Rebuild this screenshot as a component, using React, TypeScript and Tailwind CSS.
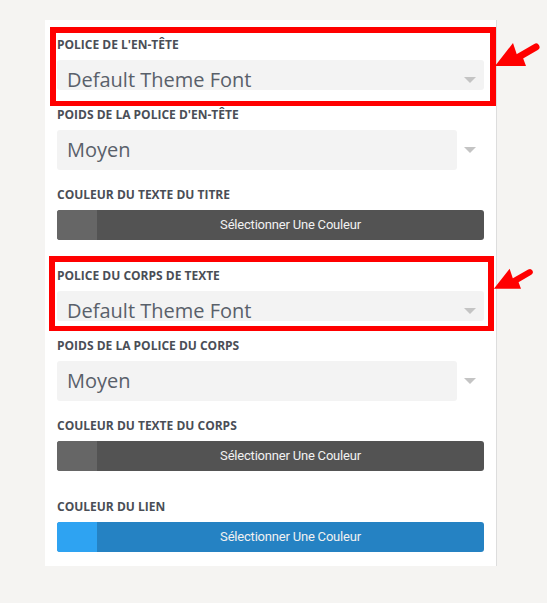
import React from "react";

const Caret = () => (
  <svg width="12" height="6" viewBox="0 0 12 6" className="shrink-0">
    <polygon points="0,0 12,0 6,6" fill="#c4c4c4" />
  </svg>
);

const Label = ({ children }: { children: React.ReactNode }) => (
  <div className="text-[12px] leading-[16px] font-bold text-[#4a4e56] uppercase mb-[7px] font-['Open_Sans',sans-serif]">
    {children}
  </div>
);

const WideSelect = ({ text }: { text: string }) => (
  <div className="h-[30px] w-full rounded-[3px] bg-[#f3f3f3]">
    <div className="h-[40px] flex items-center justify-between pl-[10px] pr-[8px]">
      <span className="text-[20px] leading-[28px] text-[#59606a] font-['Open_Sans',sans-serif] whitespace-nowrap">
        {text}
      </span>
      <Caret />
    </div>
  </div>
);

const NarrowSelect = ({ text }: { text: string }) => (
  <div className="h-[40px] flex items-center">
    <div className="w-[400px] h-full rounded-[3px] bg-[#f3f3f3] flex items-center pl-[10px]">
      <span className="text-[20px] leading-[28px] text-[#59606a] font-['Open_Sans',sans-serif]">
        {text}
      </span>
    </div>
    <div className="ml-[7px]">
      <Caret />
    </div>
  </div>
);

const ColorButton = ({ swatch, main }: { swatch: string; main: string }) => (
  <div className={`h-[30px] w-full rounded-[3px] flex overflow-hidden ${main}`}>
    <div className={`w-[40px] h-full ${swatch}`} />
    <div className="flex-1 flex items-center justify-center text-[13px] tracking-[-0.2px] text-[#f1f1f1] font-['Roboto',sans-serif]">
      Sélectionner Une Couleur
    </div>
  </div>
);

const Arrow = ({ className }: { className: string }) => (
  <svg className={className} width="50" height="32" viewBox="0 0 50 32">
    <polygon points="2,26 20,3 24,15 30,18 33,26" fill="#ff0000" />
    <line x1="24" y1="18" x2="43" y2="7" stroke="#ff0000" strokeWidth="7" strokeLinecap="round" />
  </svg>
);

export default function App() {
  return (
    <div className="relative w-[547px] min-h-[603px] bg-[#f5f4f2] pt-[20px] pl-[45px] font-['Open_Sans',sans-serif]">
      <div className="w-[452px] bg-white border-r border-[#dddddd] pl-[12px] pr-[12px] pt-[17px] pb-[14px]">
        <div className="mb-[17px]">
          <Label>Police de l'en-tête</Label>
          <WideSelect text="Default Theme Font" />
        </div>
        <div className="mb-[17px]">
          <Label>Poids de la police d'en-tête</Label>
          <NarrowSelect text="Moyen" />
        </div>
        <div className="mb-[28px]">
          <Label>Couleur du texte du titre</Label>
          <ColorButton swatch="bg-[#666666]" main="bg-[#535353]" />
        </div>
        <div className="mb-[17px]">
          <Label>Police du corps de texte</Label>
          <WideSelect text="Default Theme Font" />
        </div>
        <div className="mb-[17px]">
          <Label>Poids de la police du corps</Label>
          <NarrowSelect text="Moyen" />
        </div>
        <div className="mb-[28px]">
          <Label>Couleur du texte du corps</Label>
          <ColorButton swatch="bg-[#666666]" main="bg-[#535353]" />
        </div>
        <div>
          <Label>Couleur du lien</Label>
          <ColorButton swatch="bg-[#2ea3f2]" main="bg-[#2582c3]" />
        </div>
      </div>

      <div className="absolute left-[50px] top-[27px] w-[446px] h-[79px] border-[6px] border-b-[5px] border-[#ff0000]" />
      <div className="absolute left-[49px] top-[256px] w-[445px] h-[75px] border-[6px] border-b-[5px] border-[#ff0000]" />
      <Arrow className="absolute left-[493px] top-[40px]" />
      <Arrow className="absolute left-[492px] top-[266px] w-[44px] h-[28px]" />
    </div>
  );
}
